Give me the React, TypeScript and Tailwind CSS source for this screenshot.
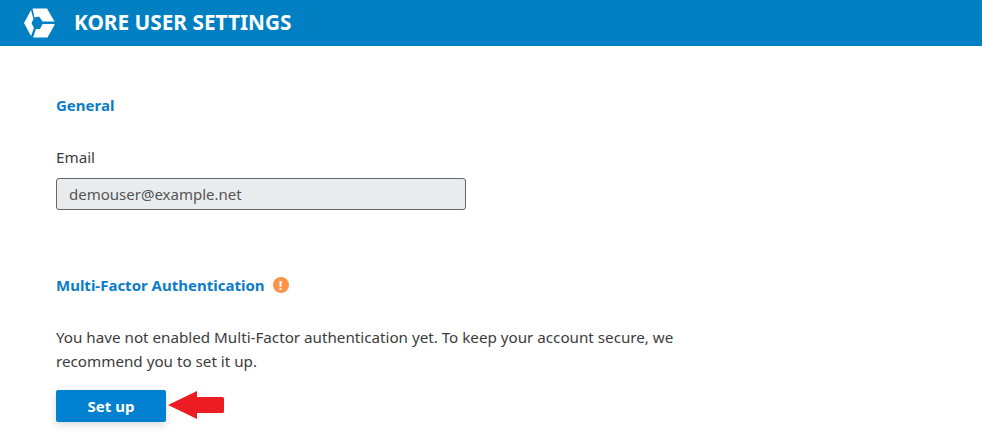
import React from "react";

const font = { fontFamily: '"Noto Sans", sans-serif' };

const KoreLogo: React.FC = () => (
  <svg width="31" height="30" viewBox="0 0 31 30" fill="#fff" aria-hidden="true">
    <path d="M8.5 0.5H23L30.5 13.5H18.5L15 8.5L10.5 9.5Z" />
    <path d="M7 2L9.5 11L7.5 15L10 20L7 28L0 15Z" />
    <path d="M30.5 16V17L23.5 29.5H9L12 21L16 21L18.5 16Z" />
  </svg>
);

export default function App() {
  return (
    <div className="w-[982px] h-[441px] overflow-hidden bg-white text-[15.2px] text-[#3c3c3c]" style={font}>
      {/* Top bar */}
      <header className="h-[46px] bg-[#0080c3] flex items-center pl-6 gap-[19px]">
        <KoreLogo />
        <h1 className="text-[20.8px] font-bold text-white">KORE USER SETTINGS</h1>
      </header>

      <main className="px-14">
        <h2 className="mt-[49px] text-[15px] leading-5 font-bold text-[#0c7cc9]">General</h2>

        <label className="block mt-[32px] leading-5">Email</label>
        <div className="mt-[11px] w-[410px] h-8 flex items-center px-3 rounded-[3px] border border-[#666] bg-[#e9ecef] text-[#555] text-[15px]">
          demouser@example.net
        </div>

        <div className="mt-[65px] flex items-center gap-[8px]">
          <h2 className="text-[15px] leading-5 font-bold text-[#0c7cc9]">Multi-Factor Authentication</h2>
          <span className="w-4 h-4 rounded-full bg-[#fd9349] text-white text-[13px] leading-4 font-bold text-center">!</span>
        </div>

        <p className="mt-[30px] w-[640px] leading-6">
          You have not enabled Multi-Factor authentication yet. To keep your account secure, we recommend you to set it up.
        </p>

        <div className="relative mt-[17px] w-[110px]">
          <button className="w-[110px] h-8 rounded-[2px] bg-[#0080d0] text-white font-bold text-[15px] shadow-[0_3px_8px_rgba(0,0,0,0.15)]">
            Set up
          </button>
          {/* Callout arrow */}
          <svg className="absolute left-[112px] top-0" width="56" height="30" viewBox="0 0 56 30" aria-hidden="true">
            <path d="M0 15L29 1V7H54.5Q56 7 56 8.5V21.5Q56 23 54.5 23H29V29Z" fill="#ed1c24" />
          </svg>
        </div>
      </main>
    </div>
  );
}
